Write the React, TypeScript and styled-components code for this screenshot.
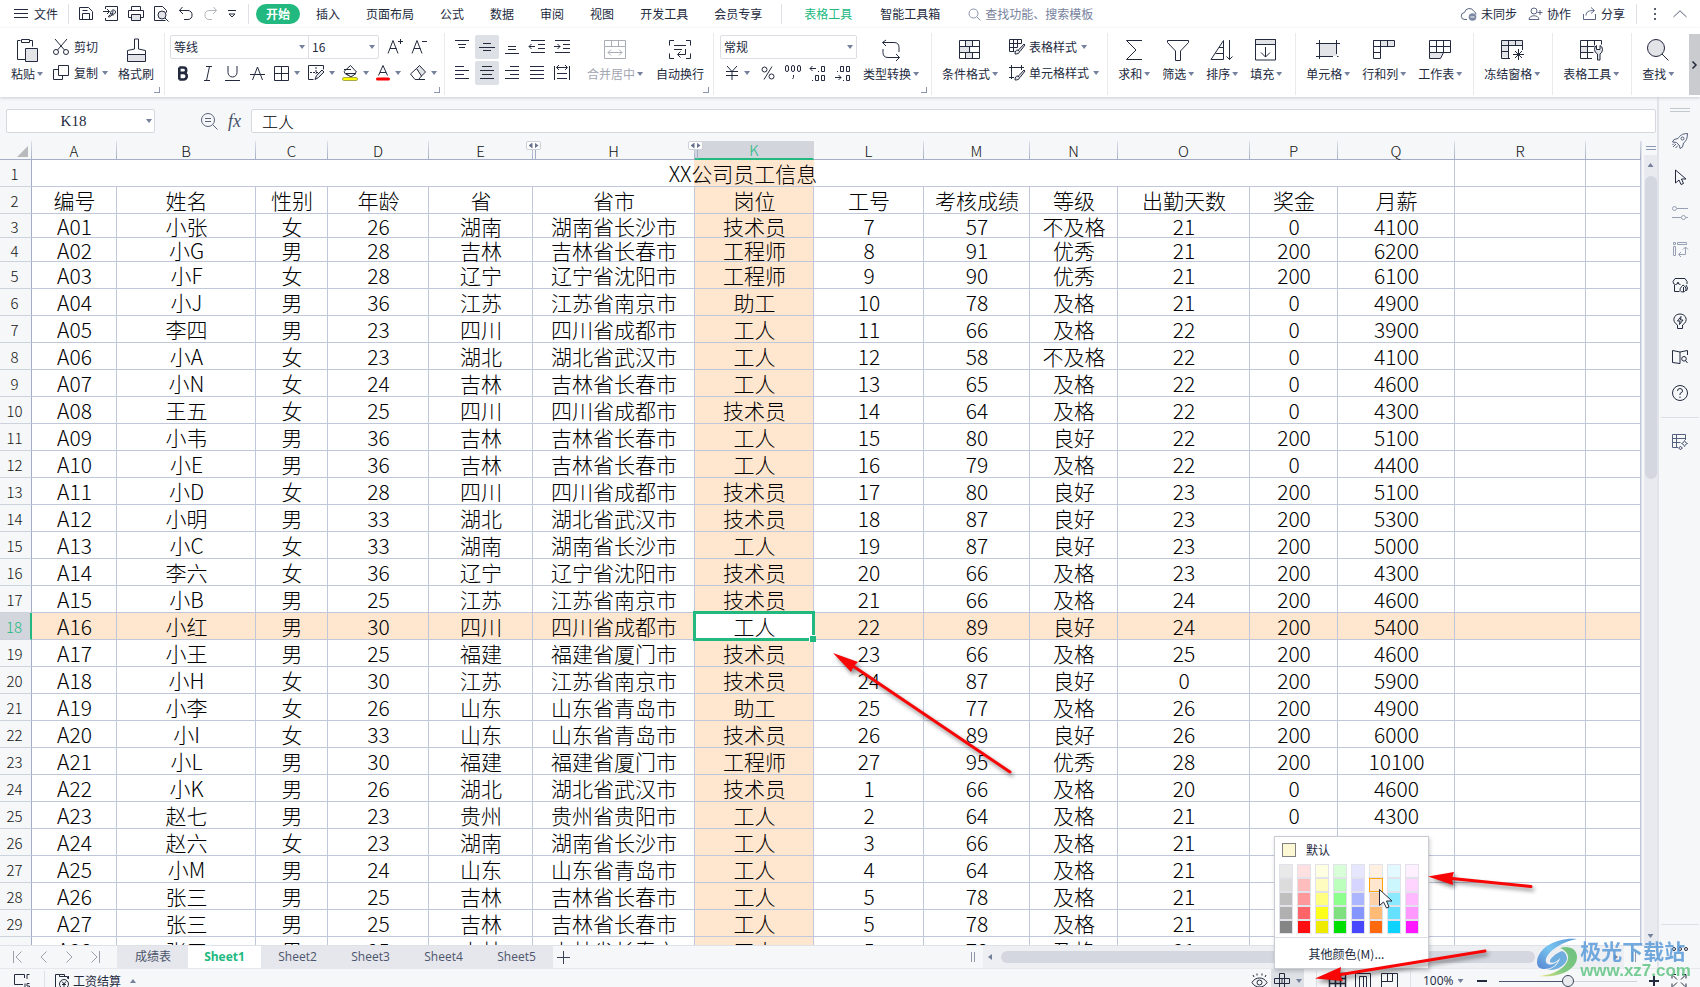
import React from 'react';
import styled, { createGlobalStyle, css } from 'styled-components';

const ink = '#232a3e';
const green = '#21b97f';
const line = '#c0c7da';
const headLine = '#a5adc6';
const panel = '#f5f7f9';
const peach = '#ffe6cf';
const uiFont = '"Noto Sans CJK SC", "Noto Sans", sans-serif';

const GlobalStyle = createGlobalStyle`
  * { box-sizing: border-box; }
  body { margin: 0; overflow: hidden; font: 12px/16px ${uiFont}; color: ${ink}; background: #fff; }
  button, input, select { font: inherit; color: inherit; margin: 0; padding: 0; border: 0; background: none; outline: none; }
  svg { display: block; flex: none; overflow: visible; }
`;

/* ---------- icons ---------- */

type Art = { w?: number; h?: number; art: React.ReactNode };
const shade = '#e2e4e8';

const icons: Record<string, Art> = {
  menu: { w: 14, h: 12, art: <path d="M0 1.5h14M0 5.5h14M0 9.5h14" /> },
  save: { art: <path d="M1.5 1.5h9l4 4v8h-13zM4.5 13.5v-6h7v6M4.5 4.5h5" /> },
  exportPdf: { art: <path d="M2.5 3V.5h12v14h-12V12M0 5.5h6M4 3l2.500 2.500L4 8M7.500 8c0-5 5-5 5-2s-4.500 2.500-4.500 1M10 4.500c0 4-2 6.500-4.500 6.500 0-2.500 3-2 5-2" /> },
  print: { art: <><path d="M3.500 4.500v-4h9v4M3.500 11.500h-3v-7h15v7h-3" /><path d="M3.500 8.500h9v6h-9z" fill={shade} /></> },
  preview: { art: <><path d="M12.500 14.500h-11v-14h8l4 4v2M13 4.500" /><circle cx="9" cy="9" r="4" fill={shade} /><path d="M12 12l3.500 3.500" /></> },
  undo: { art: <path d="M4.500 1L1.500 4.500 5 8M1.500 4.500H10a4 4 0 014 4.500 4 4 0 01-4 4.500H6" /> },
  redo: { art: <path stroke="#b4b7bd" d="M10.500 1l3 3.500L10 8M13.500 4.500H6a4 4 0 00-4 4.500 4 4 0 004 4.500h3" /> },
  custom: { w: 8, h: 8, art: <path d="M0 .5h8M1 4l3 3 3-3z" /> },
  search: { w: 13, h: 13, art: <><circle cx="5.500" cy="5.500" r="4.500" stroke="#8a93ac" /><path stroke="#8a93ac" d="M9 9l3.500 3.500" /></> },
  cloud: { art: <><path stroke="#5b6784" d="M6 13.500H4a3.500 3.500 0 01-.5-7 5 5 0 019.500-1 3 3 0 012 3" /><circle cx="11.500" cy="11" r="3.800" fill="#7c89a5" stroke="none" /><path stroke="#fff" d="M9.500 11h4" /></> },
  person: { w: 15, art: <path stroke="#5b6784" d="M6 2a3 3 0 010 6 3 3 0 010-6zM1 13.500c0-5 10-5 10 0zM9.500 6.500h5M12 4v5" /> },
  share: { w: 15, art: <path stroke="#5b6784" d="M1.500 8v5.500h12V8M4 9.500c0-4 3-5 8-5M9 1.500l3.500 3L9 7.500" /> },
  dots: { w: 4, h: 14, art: <path stroke="none" fill="#59616f" d="M1 1h2v2H1zM1 6h2v2H1zM1 11h2v2H1z" /> },
  up: { w: 14, h: 8, art: <path stroke="#59616f" d="M.5 7L7 .8 13.500 7" /> },

  paste: { w: 24, h: 24, art: <><path d="M5.500 2.500h-3v19h8M14.500 2.500h3v6M6.500 1.500h8v3h-8z" /><path d="M10.500 10.500h12v13h-12z" fill={shade} /></> },
  brush: { w: 24, h: 24, art: <><path d="M3.500 16.500v-4l7-1.500v-10h4v10l7 1.500v4" /><path d="M3.500 16.500h18v7h-18z" fill={shade} /></> },
  cut: { w: 17, art: <><path d="M2 0l9.500 11M14 0L4.500 11" /><circle cx="3" cy="13" r="2.500" /><circle cx="13" cy="13" r="2.500" /></> },
  copy: { w: 17, art: <path d="M5.500.5h10v10h-10zM5 4.500H.5v10h9v-3.500" /> },
  fontUp: { art: <path d="M1 14.500l5-13 5 13M3 9.500h6.500M13.500 0v5M11 2.500h5" /> },
  fontDown: { art: <path d="M1 14.500l5-13 5 13M3 9.500h6.500M11 2.500h5" /> },
  bold: { w: 12, h: 15, art: <path strokeWidth="2.600" d="M2.300 1.500v12M2.300 1.500h4.200a2.600 2.600 0 010 5.400H2.300M6.500 6.900a3.200 3.200 0 010 6.600H2.300" /> },
  italic: { w: 10, h: 15, art: <path d="M3 .5h6M1 14.500h6M6.500.5l-3 14" /> },
  underline: { w: 15, h: 15, art: <path d="M3 0v6.500a4.500 4.500 0 009 0V0M0 14.500h15" /> },
  strike: { w: 15, h: 15, art: <path d="M2.500 14l5-13 5 13M0 8.500h15" /> },
  borders: { w: 15, h: 15, art: <path d="M.5.5h14v14H.5zM7.500.5v14M.5 7.500h14" /> },
  cellBrush: { w: 16, art: <><path d="M15.500 4.500v-4H.5v14h5" /><path strokeDasharray="2 1" d="M8 2v7M2 7.500h10" /><path d="M7 14.500l1.500-4L14 5l2 2-5.500 5.500z" fill={shade} /></> },
  fill: { w: 16, art: <><path d="M2 6.500L8.500.5 14.500 7 9 11.500 3.500 9z" fill="#fff" /><path d="M4 8.500h10L9 12z" fill={shade} /><path d="M2 4.500h7" /><rect x=".5" y="12.500" width="15" height="3" rx="1.500" fill="#ff0" stroke="#a9a94a" /></> },
  fontColor: { w: 14, art: <><path d="M2.500 10.500l4.500-10 4.500 10M4 7.500h6" /><rect x="0" y="12.500" width="14" height="3" rx="1.500" fill="#f00" stroke="none" /></> },
  eraser: { w: 16, art: <><path d="M6.500 3.500l3-3 6 6.500-4.500 4.500z" fill={shade} /><path d="M.5 9l6-5.500 5 7.500-3 3.500H5z" fill="#fff" /><path d="M5 14.500h10" /></> },

  vTop: { art: <path d="M1 1.500h14M4 5.500h8M5 8.500h6" /> },
  vMid: { art: <path d="M4 4.500h8M0 8.500h16M4 11.500h8" /> },
  vBot: { art: <path d="M4 7.500h8M4 10.500h8M1 14.500h14" /> },
  outdent: { art: <path d="M2 1.500h14M9 5.500h7M9 9.500h7M2 13.500h14M0 7.500h6M2.500 5L0 7.500 2.500 10" /> },
  indent: { art: <path d="M1 1.500h15M9 5.500h7M9 9.500h7M1 13.500h15M0 7.500h6M3.500 5L6 7.500 3.500 10" /> },
  left: { art: <path d="M1 1.500h9M1 5.500h14M1 9.500h9M1 13.500h14" /> },
  center: { art: <path d="M3 1.500h10M1 5.500h14M3 9.500h10M1 13.500h14" /> },
  right: { art: <path d="M6 1.500h9M1 5.500h14M6 9.500h9M1 13.500h14" /> },
  justify: { art: <path d="M1 1.500h14M1 5.500h14M1 9.500h14M1 13.500h14" /> },
  distribute: { art: <path d="M.5 1v14M15.500 1v14M3 2.500h10M5 0L2.500 2.500 5 5M11 0l2.500 2.500L11 5M3 8.500h10M3 13.500h10" /> },
  merge: { w: 22, h: 20, art: <path stroke="#a9adb6" d="M.5.5h21v18H.5zM.5 6.500h21M7.500.5v6M14.500.5v6M4 12.500h14M7 9.500l-3 3 3 3M15 9.500l3 3-3 3" /> },
  wrap: { w: 22, h: 20, art: <path d="M5 .5H.5v5M17 .5h4.500v5M5 18.500H.5v-5M17 18.500h4.500v-5M5 5.500h12M5 9.500h8M16.500 9v5.500H9M11.500 11.500l-3 3 3 3" /> },
  yen: { w: 14, h: 14, art: <path d="M2 0l5 5.500L12 0M1 5.500h12M1 9.500h12M7 5.500V14" /> },
  percent: { w: 14, h: 14, art: <><circle cx="3.500" cy="3.500" r="2.500" /><circle cx="10.500" cy="10.500" r="2.500" /><path d="M11 .5l-8 13" /></> },
  thousands: { art: <path d="M.5 2q0-1.500 1.500-1.500T3.500 2v3q0 1.500-1.500 1.500T.5 5zM6.500 2q0-1.500 1.500-1.500T9.500 2v3q0 1.500-1.500 1.500T6.500 5zM12.500 2q0-1.500 1.500-1.500T15.500 2v3q0 1.500-1.500 1.500T12.500 5zM8.500 10v2.500l-1 1.500" /> },
  decUp: { art: <path d="M0 3.500h6M2.500 1L0 3.500 2.500 6M8 6.500h1M11.500 1.500h3v5h-3zM2 15.500h1M5.500 10.500h3v5h-3zM11.500 10.500h3v5h-3z" /> },
  decDown: { art: <path d="M2 6.500h1M5.500 1.500h3v5h-3zM11.500 1.500h3v5h-3zM0 12.500h6M3.500 10L6 12.500 3.500 15M8 15.500h1M11.500 10.500h3v5h-3z" /> },
  convert: { w: 20, h: 22, art: <path d="M5 1L1.500 3.500 5 7M1.500 3.500H13q5 0 5 5V13M15 22l3.500-3.500L15 15M18.500 18.500H7q-5 0-5-5V10" /> },
  condFmt: { w: 22, h: 20, art: <><path d="M7 .5h7v6H7zM.5 6.500h11v6H.5zM7 12.500h7v6H7z" fill={shade} stroke="none" /><path d="M.5.5h20v18H.5zM.5 6.500h20M.5 12.500h20M6.500.5v6M13.500.5v6M10.500 6.500v6M6.500 12.500v6M13.500 12.500v6" /></> },
  tblStyle: { art: <><path d="M.5.5h12v4M.5.500v12h5M.5 4.500h12M.5 8.500h8M4.500.5v12M8.500.5v8" /><path d="M6 15c0-3 1-4 3-4l1.500 1.500c0 2-2 2.500-4.500 2.500zM9.500 11L15 5l1 1-5 6.500" fill={shade} /></> },
  cellStyle: { art: <><path d="M2.500 0v14M0 2.500h15M12.500 0v5M0 12.500h5" /><path d="M6 15c0-3 1-4 3-4l1.500 1.500c0 2-2 2.500-4.500 2.500zM9.500 11L15 5l1 1-5 6.500" fill={shade} /></> },
  sum: { w: 18, h: 22, art: <path d="M17 1.500H1.500L11 11l-9.500 9.500H17" /> },
  filter: { w: 22, h: 22, art: <path d="M.5 1.500h21v2L13.500 12v9.500h-5V12L.5 3.500z" /> },
  sort: { w: 24, h: 22, art: <path d="M1 20.500L13.500 1.500v19zM9 8.500h4.500M5.500 14.500h8M19.500 1v19.500M16.500 17.500l3 3 3-3" /> },
  fillDown: { w: 22, h: 22, art: <><path d="M.5.5h20v5H.5z" fill={shade} /><path d="M.5.5h20v20.500H.5zM10.500 8v10M6 13.500l4.500 4.500 4.500-4.500" /></> },
  cell: { w: 24, h: 20, art: <><path d="M4 4h17v12H4z" fill={shade} stroke="none" /><path d="M0 3.500h24M3.500 0v19M20.500 0v14M0 16.500h17M21 16.500h1.500" /></> },
  rowCol: { w: 22, h: 20, art: <><path d="M8 .5h14v6H8z" fill={shade} stroke="none" /><path d="M.5.5h21v6H.5zM.5.5v18h7V.5M14.500.5v6M.5 12.500h7" /></> },
  sheet: { w: 22, h: 20, art: <><path d="M.5 13h14l-3 5.500H.5z" fill={shade} stroke="none" /><path d="M.5.5h21v12H.5zM.5 6.500h21M7.500.5v12M14.500.5v12M.5 12.500v6h11l3-6" /></> },
  freeze: { w: 22, h: 20, art: <><path d="M.5.5h21v5H.5zM.5 5.500h7v12h-7z" fill={shade} stroke="none" /><path d="M9 18.500H.5V.5h21v5H.5M7.500.5v18M14.500.5v5M.5 11.500h7M21.500 5v5M12 14.500h11M17.500 9v11M14 11l7 7M21 11l-7 7" /></> },
  tblTool: { w: 22, h: 20, art: <><path d="M.5 5.500h7v7h-7z" fill={shade} stroke="none" /><path d="M12 18.500H.5V.5h21v4M.5 6.500h14M.5 12.500h13M7.500.5v18M14.500.5v5" /><path d="M17.500 20v-6q-3-1.500-3-4.500t2-4v4h3.500v-4q2.500 1 2.500 4t-2.500 4.500v6z" fill={shade} /></> },
  find: { w: 22, h: 22, art: <><circle cx="9" cy="9" r="8.500" fill={shade} /><path d="M15 15l6.500 6.500" /></> },
  chevR: { w: 5, h: 8, art: <path d="M.5.5L4 4 .5 7.500" strokeWidth="1.500" /> },

  zoomOut: { w: 17, h: 17, art: <path stroke="#59647c" d="M7 .5a6.500 6.500 0 010 13 6.500 6.500 0 010-13zM12 12l4.500 4.500M4 5.500h6M4 8.500h6" /> },

  rocket: { art: <path stroke="#55617c" d="M15.500.5C10 .5 7.500 3 6 5.500L2 6.500.5 9l4 .5 3 3L8 15.500l2.500-1.500 1-4c2.500-1.500 4-4.500 4-9.500zM10.500 4a1.500 1.500 0 010 3 1.500 1.500 0 010-3zM4 11l-3 3M6 12.500L3.500 15M2 10.500L.5 12" /> },
  arrow: { w: 14, art: <path d="M2.500 1v13l3.500-3 2 4.500 2.500-1-2-4.500h4.500z" /> },
  sliders: { art: <path stroke="#98a0b4" d="M5 3.500h11M0 12.500h9M2.500 1.500a2 2 0 010 4 2 2 0 010-4zM11.500 10.500a2 2 0 010 4 2 2 0 010-4zM14 12.500h2" /> },
  pivot: { art: <path stroke="#98a0b4" d="M1.500 1.500h2v2h-2zM5.500 1.500h9v2h-9zM1.500 5.500h2v9h-2zM13.500 6v7.500H7M11 8.500l2.500-2.500L16 8.500M9 11l-2.500 2.500L9 16" /> },
  shop: { art: <path d="M2.500 8v6.500h5M1 4.500L3 1.500h10l2 3V7M1 4.500q0 3 2.500 3T6 5q0 2.500 2.500 2.500M8 13c0-3 2-3 3-5 2 1 3 3 3 4s-1 3-3 3-3-1-3-2zM11.500 10v5M14 8l1.500 3-1 3" /> },
  bulb: { art: <path d="M5.500 12C-1 8 2 1 8 1s9 7 2.500 11v3.500h-5zM9 3.500L5.500 8h2.500l-.5 3.500L11 7H8.500z" /> },
  book: { art: <path d="M8 3L.5 1.500v12L8 14.500M8 14.500V3l7.500-1.500V6M12 7.500a2.300 2.300 0 010 4.600 2.300 2.300 0 010-4.600zM13.500 11.500l2 2.500" /> },
  help: { art: <path d="M8 .5a7.500 7.500 0 010 15 7.500 7.500 0 010-15zM5.500 6q0-2.500 2.500-2.500T10.500 6Q10.500 7.500 8 8.500v1.500M8 11.500v1.500" /> },
  tblSpark: { art: <path stroke="#55617c" d="M6 13.500H.5V.5h13V6M.5 4.500h13M.5 8.500h8M4.500.5v13M12.500 6.500l1 2 2 1-2 1-1 2-1-2-2-1 2-1zM8.500 12l.7 1.300 1.300.7-1.300.7-.7 1.300-.7-1.300-1.300-.7 1.300-.7z" /> },

  first: { w: 9, h: 12, art: <path stroke="#9a9fab" d="M.5 0v12M8.500.5L3 6l5.500 5.500" /> },
  prev: { w: 7, h: 12, art: <path stroke="#9a9fab" d="M6.500.5L1 6l5.500 5.500" /> },
  next: { w: 7, h: 12, art: <path stroke="#9a9fab" d="M.5.5L6 6 .5 11.500" /> },
  last: { w: 9, h: 12, art: <path stroke="#9a9fab" d="M8.500 0v12M.5.5L6 6 .5 11.500" /> },
  plus: { w: 13, h: 13, art: <path d="M0 6.500h13M6.500 0v13" stroke="#3a4358" /> },
  plusBold: { w: 10, h: 10, art: <path d="M0 5h10M5 0v10" strokeWidth="2" /> },
  minusBold: { w: 10, h: 10, art: <path d="M0 5h10" strokeWidth="2" /> },
  macro: { art: <path d="M9 11.500H.5v-10h10V5M15.500 1.500h-2.500V6M11 10.500v5M15.500 10.500h-2.500v2.500h2.500v2.500H13" /> },
  payroll: { art: <><path d="M4 15.500H1.500v-14h4v2h8v2M5.500 1.500h5v2M14.500 3v3" /><circle cx="10" cy="11" r="4.500" /><path d="M8 8.500l2 2.500 2-2.500M8 11.500h4M10 11v3.500" /></> },
  eye: { w: 17, art: <><path d="M1 9.500c3-6 12-6 15 0-3 6-12 6-15 0zM3 4L2 2M6 2.500V.5M11 2.500V.5M14 4l1-2" /><circle cx="8.500" cy="9.500" r="2.500" /></> },
  cross: { art: <path d="M.5 5.500h15v5H.5zM5.500.5h5v15h-5zM8 5.500v5" /> },
  normal: { w: 17, art: <><path d="M.5.5h16v15H.5zM.5 5.500h16M.5 10.500h16M6.500.5v15M11.500.5v15" strokeWidth="1.500" /></> },
  pageView: { w: 17, art: <path d="M.5.500h15v15H.5zM4.500 3.500h7v12M8.500 3.500v12M4.500 3.500v12M3 3.500" /> },
  breakView: { w: 17, art: <path d="M.5 15.500V.5h16v15M.5 8.500h11M6.500.5v8M11.500.5v8" /> },
  full: { art: <path d="M1 5.500v-4h4M11 1.500h4v4M15 10.500v4h-4M5 14.500H1v-4M2 2.500l4 4M14 2.500l-4 4M14 13.500l-4-4M2 13.500l4-4" /> },
  more: { w: 16, h: 4, art: <><circle cx="2" cy="2" r="1.500" /><circle cx="8" cy="2" r="1.500" /><circle cx="14" cy="2" r="1.500" /></> },
};

const Icon = ({ name }: { name: string }) => {
  const { w = 16, h = 16, art } = icons[name];
  return (
    <svg width={w} height={h} viewBox={`0 0 ${w} ${h}`} fill="none" stroke={ink} strokeWidth="1" aria-hidden="true">
      {art}
    </svg>
  );
};

const Caret = styled.i<{ $up?: boolean }>`
  flex: none;
  width: 6px;
  height: 4px;
  background: #74809c;
  clip-path: ${(p) => (p.$up ? 'polygon(50% 0, 100% 100%, 0 100%)' : 'polygon(0 0, 100% 0, 50% 100%)')};
`;

/* ---------- frame ---------- */

const Shell = styled.div`
  position: relative;
  display: flex;
  flex-direction: column;
  height: 100vh;
  overflow: hidden;
`;

const Row = styled.div<{ $gap?: number }>`
  display: flex;
  align-items: center;
  gap: ${(p) => p.$gap ?? 0}px;
`;

const MenuBar = styled.header`
  flex: none;
  display: flex;
  align-items: center;
  height: 28px;
  padding: 0 13px 0 14px;
  white-space: nowrap;
`;

const Divider = styled.span<{ $h?: number }>`
  flex: none;
  width: 1px;
  height: ${(p) => p.$h ?? 20}px;
  background: #dfe1e6;
`;

const PlainButton = styled.button<{ $gap?: number }>`
  display: flex;
  align-items: center;
  gap: ${(p) => p.$gap ?? 4}px;
  white-space: nowrap;
`;

const QuickBar = styled.div`
  display: flex;
  align-items: center;
  gap: 9px;
  margin: 0 12px 0 9px;
`;

const Nav = styled.nav`
  display: flex;
  align-items: center;
  gap: 26px;
  margin: 0 19px 0 7px;
`;

const ContextTabs = styled(Nav)`
  gap: 28px;
  margin: 0 0 0 22px;
`;

const Tab = styled.button<{ $kind?: 'active' | 'context' }>`
  color: ${(p) => (p.$kind === 'context' ? green : ink)};
  ${(p) =>
    p.$kind === 'active' &&
    css`
      height: 20px;
      padding: 0 10px;
      margin-right: -10px;
      border-radius: 10px;
      background: ${green};
      color: #fff;
      font-weight: 700;
    `}
`;

const SearchBox = styled.label`
  display: flex;
  align-items: center;
  flex: 1;
  gap: 4px;
  margin-left: 28px;
  input { flex: 1; min-width: 0; }
  input::placeholder { color: #77829d; opacity: 1; }
`;

const Ribbon = styled.div`
  position: relative;
  z-index: 1;
  flex: none;
  display: flex;
  height: 69px;
  padding: 5px 0 2px;
  background: #fff;
  box-shadow: 0 1px 3px #c9ccd2;
`;

const Group = styled.div<{ $l?: number; $r?: number; $gap?: number }>`
  position: relative;
  flex: none;
  display: flex;
  gap: ${(p) => p.$gap ?? 0}px;
  padding: 2px ${(p) => p.$r ?? 10}px 0 ${(p) => p.$l ?? 10}px;
  border-right: 1px solid #e8eaed;
  &:last-of-type { border-right: 0; }
`;

const Launcher = styled.button`
  position: absolute;
  right: 4px;
  bottom: 2px;
  width: 6px;
  height: 6px;
  border-right: 1px solid #8a94ad;
  border-bottom: 1px solid #8a94ad;
`;

const Stack = styled.div`
  display: flex;
  flex-direction: column;
  gap: 2px;
`;

const Line = styled.div<{ $gap?: number }>`
  display: flex;
  align-items: center;
  gap: ${(p) => p.$gap ?? 0}px;
  height: 24px;
`;

const BigButton = styled.button<{ $muted?: boolean }>`
  display: flex;
  flex-direction: column;
  align-items: center;
  align-self: flex-start;
  gap: 4px;
  padding-top: 3px;
  color: ${(p) => (p.$muted ? '#a3a7b1' : ink)};
  white-space: nowrap;
`;

const IconSlot = styled.span`
  display: flex;
  align-items: center;
  justify-content: center;
  height: 24px;
`;

const IconButton = styled.button<{ $on?: boolean; $w?: number }>`
  display: flex;
  align-items: center;
  justify-content: center;
  width: ${(p) => p.$w ?? 24}px;
  height: 24px;
  border-radius: 2px;
  background: ${(p) => (p.$on ? '#dde1e6' : 'transparent')};
`;

const DropButton = styled.button`
  display: flex;
  align-items: center;
  gap: 5px;
  width: 34px;
  height: 24px;
`;

const FontTools = styled.div`
  display: flex;
  margin-right: 4px;
`;

const FieldSet = styled.div`
  display: flex;
  height: 24px;
  margin-right: 4px;
  border: 1px solid #dcdee3;
  border-radius: 2px;
`;

const Field = styled.span<{ $w: number; $split?: boolean }>`
  display: grid;
  align-items: center;
  width: ${(p) => p.$w}px;
  border-left: ${(p) => (p.$split ? '1px solid #dcdee3' : '0')};
  > * { grid-area: 1 / 1; }
  > i { justify-self: end; margin-right: 3px; pointer-events: none; }
  select { appearance: none; width: 100%; height: 100%; padding-left: 3px; }
`;

const ScrollRibbon = styled.button`
  display: flex;
  align-items: center;
  justify-content: center;
  width: 11px;
  margin: 1px 0 0 auto;
  background: #cacbcf;
`;

const Tool = ({ icon, label, drop = true, muted }: { icon: string; label: string; drop?: boolean; muted?: boolean }) => (
  <BigButton $muted={muted} type="button">
    <IconSlot><Icon name={icon} /></IconSlot>
    <Row $gap={2}>{label}{drop && <Caret />}</Row>
  </BigButton>
);

/* ---------- formula bar ---------- */

const Body = styled.div`
  flex: 1;
  min-height: 0;
  display: flex;
`;

const Main = styled.main`
  flex: 1;
  min-width: 0;
  display: flex;
  flex-direction: column;
  background: ${panel};
`;

const FormulaBar = styled.div`
  flex: none;
  display: flex;
  align-items: center;
  height: 44px;
  padding: 4px 1px 0 6px;
`;

const NameBox = styled.div`
  display: flex;
  align-items: center;
  width: 149px;
  height: 24px;
  padding-right: 2px;
  border: 1px solid #d5d8de;
  border-radius: 2px;
  background: #fff;
  input { flex: 1; min-width: 0; padding-right: 6px; text-align: center; font: 15px/20px "Liberation Serif", serif; }
`;

const FormulaTools = styled.div`
  display: flex;
  align-items: center;
  gap: 10px;
  margin: 0 10px 0 46px;
  button:last-child { font: italic 18px/20px "Liberation Serif", serif; color: #47516a; }
`;

const FormulaInput = styled.input`
  && {
    flex: 1;
    height: 24px;
    padding: 0 10px;
    border: 1px solid #d5d8de;
    border-radius: 2px;
    background: #fff;
    font-size: 16px;
    font-weight: 300;
    color: #000;
  }
`;

/* ---------- grid ---------- */

const SheetRow = styled.div`
  flex: 1;
  min-height: 0;
  display: flex;
`;

const Viewport = styled.div`
  flex: 1;
  min-width: 0;
  overflow: hidden;
  background: #fff;
`;

const Grid = styled.table`
  width: 100%;
  table-layout: fixed;
  border-collapse: separate;
  border-spacing: 0;
  color: #000;
  font-size: 21px;
  font-weight: 300;
`;

const ColHead = styled.th<{ $on?: boolean }>`
  position: relative;
  height: 19px;
  padding: ${(p) => (p.$on ? 1 : 2)}px 0 0;
  border-right: 1px solid;
  border-image: linear-gradient(#dfe2ea, ${headLine}) 1;
  border-bottom: ${(p) => (p.$on ? `2px solid ${green}` : `1px solid ${headLine}`)};
  ${(p) => p.$on && `border-image: none; border-right-color: #d2d5dc; border-bottom-color: ${green};`}
  background: ${(p) => (p.$on ? '#d2d5dc' : panel)};
  color: ${(p) => (p.$on ? green : '#111')};
  font-size: 15px;
  line-height: 16px;
  font-weight: 300;
`;

const Corner = styled(ColHead)`
  padding: 0;
  i {
    display: block;
    width: 11px;
    height: 11px;
    margin: 3px 3px 0 auto;
    background: #b9babd;
    clip-path: polygon(100% 0, 100% 100%, 0 100%);
  }
`;

const Expander = styled.button`
  position: absolute;
  z-index: 1;
  right: -9px;
  top: 0;
  display: flex;
  align-items: center;
  justify-content: center;
  gap: 2px;
  width: 15px;
  height: 9px;
  border: 1px solid #cdd0d8;
  border-radius: 2px;
  background: #fff;
  i { width: 4px; height: 6px; background: #68728c; clip-path: polygon(0 50%, 100% 0, 100% 100%); }
  i + i { clip-path: polygon(100% 50%, 0 0, 0 100%); }
  &::after {
    content: '';
    position: absolute;
    left: 8px;
    top: 8px;
    width: 1px;
    height: 9px;
    background: ${headLine};
  }
`;

const RowHead = styled.th<{ $on?: boolean; $h: number }>`
  height: ${(p) => p.$h}px;
  padding: 2px 2px 0 0;
  border-right: ${(p) => (p.$on ? `2px solid ${green}` : `1px solid ${headLine}`)};
  border-bottom: 1px solid #cdd2df;
  background: ${(p) => (p.$on ? '#d2d5dc' : panel)};
  color: ${(p) => (p.$on ? green : '#111')};
  font-size: 15px;
  line-height: 20px;
  font-weight: 300;
`;

const Cell = styled.td<{ $on?: boolean; $h: number }>`
  height: ${(p) => p.$h}px;
  padding: ${(p) => (p.$h < 27 ? 2 : 0)}px 0 0 1px;
  border-right: 1px solid ${line};
  border-bottom: 1px solid ${line};
  background: ${(p) => (p.$on ? peach : '#fff')};
  text-align: center;
  line-height: ${(p) => (p.$h < 27 ? p.$h - 3 : p.$h - 1)}px;
  white-space: nowrap;
`;

const TitleCell = styled(Cell)`
  padding-left: 0;
  background: linear-gradient(to right, #fff 662px, ${peach} 662px, ${peach} 782px, #fff 782px);
`;

const ActiveCell = styled(Cell)`
  position: relative;
  &::before {
    content: '';
    position: absolute;
    inset: -2px -2px -2px -2px;
    border: 3px solid ${green};
  }
  &::after {
    content: '';
    position: absolute;
    right: -3px;
    bottom: -3px;
    width: 6px;
    height: 6px;
    border: solid #fff;
    border-width: 1px 0 0 1px;
    background: ${green};
  }
`;

const cols: [string, number | undefined][] = [
  ['A', 85], ['B', 139], ['C', 72], ['D', 101], ['E', 104], ['H', 162], ['K', 119], ['L', 110],
  ['M', 106], ['N', 88], ['O', 132], ['P', 88], ['Q', 117], ['R', 131], ['', undefined],
];

const data = `编号 姓名 性别 年龄 省 省市 岗位 工号 考核成绩 等级 出勤天数 奖金 月薪
A01 小张 女 26 湖南 湖南省长沙市 技术员 7 57 不及格 21 0 4100
A02 小G 男 28 吉林 吉林省长春市 工程师 8 91 优秀 21 200 6200
A03 小F 女 28 辽宁 辽宁省沈阳市 工程师 9 90 优秀 21 200 6100
A04 小J 男 36 江苏 江苏省南京市 助工 10 78 及格 21 0 4900
A05 李四 男 23 四川 四川省成都市 工人 11 66 及格 22 0 3900
A06 小A 女 23 湖北 湖北省武汉市 工人 12 58 不及格 22 0 4100
A07 小N 女 24 吉林 吉林省长春市 工人 13 65 及格 22 0 4600
A08 王五 女 25 四川 四川省成都市 技术员 14 64 及格 22 0 4300
A09 小韦 男 36 吉林 吉林省长春市 工人 15 80 良好 22 200 5100
A10 小E 男 36 吉林 吉林省长春市 工人 16 79 及格 22 0 4400
A11 小D 女 28 四川 四川省成都市 技术员 17 80 良好 23 200 5100
A12 小明 男 33 湖北 湖北省武汉市 技术员 18 87 良好 23 200 5300
A13 小C 女 33 湖南 湖南省长沙市 工人 19 87 良好 23 200 5000
A14 李六 女 36 辽宁 辽宁省沈阳市 技术员 20 66 及格 23 200 4300
A15 小B 男 25 江苏 江苏省南京市 技术员 21 66 及格 24 200 4600
A16 小红 男 30 四川 四川省成都市 工人 22 89 良好 24 200 5400
A17 小王 男 25 福建 福建省厦门市 技术员 23 66 及格 25 200 4600
A18 小H 女 30 江苏 江苏省南京市 技术员 24 87 良好 0 200 5900
A19 小李 女 26 山东 山东省青岛市 助工 25 77 及格 26 200 4900
A20 小I 女 33 山东 山东省青岛市 技术员 26 89 良好 26 200 6000
A21 小L 男 30 福建 福建省厦门市 工程师 27 95 优秀 28 200 10100
A22 小K 男 26 湖北 湖北省武汉市 技术员 1 66 及格 20 0 4600
A23 赵七 男 23 贵州 贵州省贵阳市 工人 2 64 及格 21 0 4300
A24 赵六 女 23 湖南 湖南省长沙市 工人 3 66 及格 21 0 3900
A25 小M 男 24 山东 山东省青岛市 工人 4 64 及格 21
A26 张三 男 25 吉林 吉林省长春市 工人 5 78 及格 21
A27 张三 男 25 吉林 吉林省长春市 工人 5 78 及格 21
A28 张三 男 25 吉林 吉林省长春市 工人 5 78 及格 21`
  .split('\n')
  .map((r) => r.split(' '));

const rowHeight = (n: number) => (n === 3 || n === 4 ? 24 : 27);

const Sheet = () => (
  <Grid>
    <colgroup>
      <col width={32} />
      {cols.map(([name, w]) => <col key={name} width={w} />)}
    </colgroup>
    <thead>
      <tr>
        <Corner><i /></Corner>
        {cols.map(([name]) => (
          <ColHead key={name} scope="col" $on={name === 'K'}>
            {name}
            {(name === 'E' || name === 'H') && <Expander type="button" aria-label="展开隐藏列"><i /><i /></Expander>}
          </ColHead>
        ))}
      </tr>
    </thead>
    <tbody>
      <tr>
        <RowHead scope="row" $h={27}>1</RowHead>
        <TitleCell colSpan={13} $h={27}>XX公司员工信息</TitleCell>
        <Cell $h={27} />
        <Cell $h={27} />
      </tr>
      {data.map((row, i) => {
        const n = i + 2;
        const h = rowHeight(n);
        return (
          <tr key={n}>
            <RowHead scope="row" $h={h} $on={n === 18}>{n}</RowHead>
            {cols.map(([name], c) =>
              n === 18 && name === 'K'
                ? <ActiveCell key={name} $h={h}>{row[c]}</ActiveCell>
                : <Cell key={name} $h={h} $on={n === 18 || name === 'K'}>{row[c]}</Cell>,
            )}
          </tr>
        );
      })}
    </tbody>
  </Grid>
);

const VScroll = styled.div`
  flex: none;
  display: flex;
  flex-direction: column;
  width: 16px;
  padding: 0 0 0 2px;
  border-left: 1px solid #dfe1e8;
`;

const SplitHandle = styled.div`
  flex: none;
  width: 10px;
  height: 4px;
  margin: 5px 2px;
  border: solid #8b97b3;
  border-width: 1px 0;
`;

const VTrack = styled.div`
  flex: 1;
  display: flex;
  flex-direction: column;
  align-items: center;
  justify-content: space-between;
  padding: 8px 0 7px;
  background: #e8eaf0;
`;

const VThumb = styled.div`
  width: 12px;
  height: 303px;
  margin: 9px 0 auto;
  border-radius: 6px;
  background: #d4d7df;
`;

const TabBar = styled.div`
  flex: none;
  display: flex;
  align-items: center;
  height: 23px;
  border-top: 1px solid #dfe1e8;
  background: ${panel};
`;

const TabNav = styled.div`
  display: flex;
  align-items: center;
  justify-content: space-between;
  width: 117px;
  padding: 0 17px 0 13px;
`;

const SheetTab = styled.button<{ $on?: boolean }>`
  width: 73px;
  height: 22px;
  background: ${(p) => (p.$on ? '#fff' : '#e6e7ec')};
  color: ${(p) => (p.$on ? green : '#4c556c')};
  font: ${(p) => (p.$on ? 700 : 400)} 12px/20px "Open Sans", ${uiFont};
`;

const SheetTabs = styled.div`
  display: flex;
  margin-right: 4px;
  > button:first-child { width: 71px; padding-left: 1px; }
`;

const HScroll = styled.div`
  display: flex;
  align-items: center;
  width: 665px;
  gap: 8px;
  margin: 0 21px 0 auto;
`;

const HTrack = styled.div`
  flex: 1;
  display: flex;
  align-items: center;
  gap: 9px;
  height: 22px;
  padding: 0 6px 0 5px;
  background: #edeff3;
  i { width: 4px; height: 6px; background: #74809c; clip-path: polygon(0 50%, 100% 0, 100% 100%); }
  i:last-child { margin-left: auto; clip-path: polygon(100% 50%, 0 0, 0 100%); }
`;

const HThumb = styled.div`
  width: 534px;
  height: 12px;
  border-radius: 6px;
  background: #d4d7df;
`;

const Grip = styled.span`
  width: 4px;
  height: 10px;
  border: solid #8f97a8;
  border-width: 0 1px;
`;

/* ---------- side panel ---------- */

const SideBar = styled.aside`
  flex: none;
  display: flex;
  flex-direction: column;
  align-items: center;
  width: 43px;
  border-left: 2px solid #e1e3ea;
  background: ${panel};
`;

const DragHandle = styled.div`
  width: 20px;
  height: 4px;
  margin: 11px 0;
  border: solid #c4c8cf;
  border-width: 1px 0;
`;

const SideButton = styled.button`
  display: flex;
  align-items: center;
  justify-content: center;
  width: 36px;
  height: 36px;
`;

const SideRule = styled.hr<{ $push?: boolean }>`
  width: 38px;
  margin: ${(p) => (p.$push ? 'auto 0 22px' : '6px 0')};
  border: 0;
  border-top: 1px solid #dde0e6;
`;

const SideMore = styled(PlainButton)`
  margin-bottom: 17px;
`;

/* ---------- status bar ---------- */

const StatusClip = styled.footer`
  flex: none;
  height: 19px;
  overflow: hidden;
  background: ${panel};
  border-top: 1px solid #e6e8ec;
`;

const Status = styled.div`
  display: flex;
  align-items: center;
  height: 24px;
  padding: 0 13px 0 14px;
`;

const StatusRight = styled.div`
  display: flex;
  align-items: center;
  gap: 12px;
  margin-left: auto;
`;

const HighlightButton = styled.button`
  display: flex;
  align-items: center;
  gap: 6px;
  width: 33px;
  height: 26px;
  padding-left: 3px;
  background: #dde1e6;
`;

const ZoomLevel = styled(PlainButton)`
  width: 42px;
  font-family: "Open Sans", sans-serif;
`;

const ZoomRange = styled.input`
  && {
    appearance: none;
    width: 138px;
    height: 14px;
    background: linear-gradient(to right, #4b5570 50%, #cfd2da 50%) center / 100% 1px no-repeat;
  }
  &::-webkit-slider-thumb {
    appearance: none;
    width: 12px;
    height: 12px;
    border: 1px solid #3d465c;
    border-radius: 50%;
    background: #e9ebee;
  }
`;

/* ---------- colour menu ---------- */

const ColorMenu = styled.div`
  position: absolute;
  right: 271px;
  bottom: 18px;
  width: 155px;
  height: 133px;
  border: 1px solid #c9ccd3;
  background: #fff;
  box-shadow: 1px 2px 4px #0003;
`;

const DefaultColor = styled(PlainButton)`
  height: 26px;
  padding: 0 0 0 7px;
  span { width: 14px; height: 14px; margin-right: 6px; border: 1px solid #808080; background: #fcf8d3; }
`;

const Swatches = styled.div`
  display: grid;
  grid-template-columns: repeat(8, 14px);
  grid-auto-rows: 14px;
  column-gap: 4px;
  padding: 1px 0 3px 4px;
`;

const Swatch = styled.button<{ $c: string; $on?: boolean }>`
  border: 1px solid ${(p) => (p.$on ? '#ffa60d' : '#e1e2ea')};
  background: ${(p) => p.$c};
`;

const OtherColors = styled(PlainButton)`
  justify-content: center;
  width: 100%;
  height: 32px;
  padding-right: 10px;
  border-top: 1px solid #dcdee3;
`;

const swatches = `#e9e9e9 #ffe0e0 #ffffe2 #d9ffd9 #e6e6ff #fff0e2 #e2faff #fff0ff
#dcdcdc #ffbcbc #fffcbf #bcffbc #d5d5ff #ffe6cf #ccf7ff #ffd5ff
#bfbfbf #ff989b #ffff80 #8cff8c #acb6ff #ffd1a8 #8ceaff #ffbaff
#b0b0b0 #ff6468 #ffff1c #80e080 #8596ff #ffbb75 #66e0ff #ff98ff
#858585 #ff0f12 #eeea00 #00df00 #4747ff #ff690d #0fd3ff #ff17ff`.split(/\s+/);

/* ---------- annotations ---------- */

const Mark = styled.svg<{ $l?: number; $t?: number; $r?: number; $b?: number }>`
  position: absolute;
  z-index: 3;
  ${(p) => p.$l !== undefined && `left: ${p.$l}px;`}
  ${(p) => p.$t !== undefined && `top: ${p.$t}px;`}
  ${(p) => p.$r !== undefined && `right: ${p.$r}px;`}
  ${(p) => p.$b !== undefined && `bottom: ${p.$b}px;`}
  pointer-events: none;
`;

const Arrow = styled(Mark)`
  filter: drop-shadow(2px 3px 2px #0007);
  fill: #f80606;
  stroke: #f80606;
  stroke-linecap: round;
`;

const SiteMark = styled.div`
  position: absolute;
  z-index: 2;
  right: 9px;
  bottom: 8px;
  display: flex;
  align-items: center;
  gap: 2px;
  opacity: 0.85;
  pointer-events: none;
  div { display: grid; white-space: nowrap; }
  strong { color: #5b9bd8; font-size: 21px; line-height: 26px; }
  span { color: #62c584; font: 700 17px/16px "Liberation Sans", sans-serif; }
`;

export default function App() {
  return (
    <Shell>
      <GlobalStyle />
      <MenuBar>
        <Row $gap={10}>
          <PlainButton type="button" $gap={6}><Icon name="menu" />文件</PlainButton>
          <Divider />
        </Row>
        <QuickBar>
          {['save', 'exportPdf', 'print', 'preview', 'undo', 'redo'].map((n) => (
            <PlainButton key={n} type="button" aria-label={n}><Icon name={n} /></PlainButton>
          ))}
          <PlainButton type="button" aria-label="custom"><IconSlot><Icon name="custom" /></IconSlot></PlainButton>
        </QuickBar>
        <Divider />
        <Nav>
          <Tab type="button" $kind="active">开始</Tab>
          {['插入', '页面布局', '公式', '数据', '审阅', '视图', '开发工具', '会员专享'].map((t) => <Tab key={t} type="button">{t}</Tab>)}
        </Nav>
        <Divider />
        <ContextTabs>
          <Tab type="button" $kind="context">表格工具</Tab>
          <Tab type="button">智能工具箱</Tab>
        </ContextTabs>
        <SearchBox><Icon name="search" /><input placeholder="查找功能、搜索模板" aria-label="查找功能、搜索模板" /></SearchBox>
        <Row $gap={11}>
          <PlainButton type="button"><Icon name="cloud" />未同步</PlainButton>
          <PlainButton type="button"><Icon name="person" />协作</PlainButton>
          <PlainButton type="button"><Icon name="share" />分享</PlainButton>
          <Row $gap={16}>
            <Divider />
            <PlainButton type="button" aria-label="更多"><Icon name="dots" /></PlainButton>
            <PlainButton type="button" aria-label="收起功能区"><Icon name="up" /></PlainButton>
          </Row>
        </Row>
      </MenuBar>

      <Ribbon>
        <Group $l={11} $gap={10}>
          <Tool icon="paste" label="粘贴" />
          <Stack>
            <Line><PlainButton type="button"><Icon name="cut" />剪切</PlainButton></Line>
            <Line><PlainButton type="button"><Icon name="copy" />复制<Caret /></PlainButton></Line>
          </Stack>
          <Tool icon="brush" label="格式刷" drop={false} />
          <Launcher type="button" aria-label="剪贴板设置" />
        </Group>

        <Group $l={5} $r={0}>
          <Stack>
            <Line>
              <FieldSet>
                <Field $w={137}><select aria-label="字体"><option>等线</option></select><Caret /></Field>
                <Field $w={70} $split><select aria-label="字号"><option>16</option></select><Caret /></Field>
              </FieldSet>
              <IconButton type="button" aria-label="增大字号"><Icon name="fontUp" /></IconButton>
              <IconButton type="button" aria-label="减小字号"><Icon name="fontDown" /></IconButton>
            </Line>
            <Line>
              <FontTools>
                {['bold', 'italic', 'underline', 'strike'].map((n) => (
                  <IconButton key={n} type="button" $w={25} aria-label={n}><Icon name={n} /></IconButton>
                ))}
              </FontTools>
              {['borders', 'cellBrush', 'fill', 'fontColor', 'eraser'].map((n) => (
                <DropButton key={n} type="button" aria-label={n}><Icon name={n} /><Caret /></DropButton>
              ))}
            </Line>
          </Stack>
          <Launcher type="button" aria-label="字体设置" />
        </Group>

        <Group $l={5} $r={9} $gap={13}>
          <Stack>
            <Line $gap={1}>
              {['vTop', 'vMid', 'vBot', 'outdent', 'indent'].map((n) => (
                <IconButton key={n} type="button" $on={n === 'vMid'} aria-label={n}><Icon name={n} /></IconButton>
              ))}
            </Line>
            <Line $gap={1}>
              {['left', 'center', 'right', 'justify', 'distribute'].map((n) => (
                <IconButton key={n} type="button" $on={n === 'center'} aria-label={n}><Icon name={n} /></IconButton>
              ))}
            </Line>
          </Stack>
          <Tool icon="merge" label="合并居中" muted />
          <Tool icon="wrap" label="自动换行" drop={false} />
          <Launcher type="button" aria-label="对齐设置" />
        </Group>

        <Group $l={6} $r={12} $gap={2}>
          <Stack>
            <FieldSet>
              <Field $w={135}><select aria-label="数字格式"><option>常规</option></select><Caret /></Field>
            </FieldSet>
            <Line $gap={1}>
              <IconButton type="button" $w={35} aria-label="货币"><Row $gap={5}><Icon name="yen" /><Caret /></Row></IconButton>
              {['percent', 'thousands', 'decUp', 'decDown'].map((n) => (
                <IconButton key={n} type="button" aria-label={n}><Icon name={n} /></IconButton>
              ))}
            </Line>
          </Stack>
          <Tool icon="convert" label="类型转换" />
          <Launcher type="button" aria-label="数字设置" />
        </Group>

        <Group $gap={11} $r={8}>
          <Tool icon="condFmt" label="条件格式" />
          <Stack>
            <Line><PlainButton type="button"><Icon name="tblStyle" />表格样式<Caret /></PlainButton></Line>
            <Line><PlainButton type="button"><Icon name="cellStyle" />单元格样式<Caret /></PlainButton></Line>
          </Stack>
        </Group>

        <Group $gap={12} $r={13}>
          <Tool icon="sum" label="求和" />
          <Tool icon="filter" label="筛选" />
          <Tool icon="sort" label="排序" />
          <Tool icon="fillDown" label="填充" />
        </Group>

        <Group $gap={12} $r={11}>
          <Tool icon="cell" label="单元格" />
          <Tool icon="rowCol" label="行和列" />
          <Tool icon="sheet" label="工作表" />
        </Group>

        <Group $r={12}><Tool icon="freeze" label="冻结窗格" /></Group>
        <Group $r={12}><Tool icon="tblTool" label="表格工具" /></Group>
        <Group><Tool icon="find" label="查找" /></Group>
        <ScrollRibbon type="button" aria-label="向右滚动"><Icon name="chevR" /></ScrollRibbon>
      </Ribbon>

      <Body>
        <Main>
          <FormulaBar>
            <NameBox><input aria-label="名称框" defaultValue="K18" /><Caret /></NameBox>
            <FormulaTools>
              <PlainButton type="button" aria-label="浏览公式"><Icon name="zoomOut" /></PlainButton>
              <PlainButton type="button">fx</PlainButton>
            </FormulaTools>
            <FormulaInput aria-label="编辑栏" defaultValue="工人" />
          </FormulaBar>
          <SheetRow>
            <Viewport><Sheet /></Viewport>
            <VScroll>
              <SplitHandle />
              <VTrack><Caret $up /><VThumb /><Caret /></VTrack>
            </VScroll>
          </SheetRow>
          <TabBar>
            <TabNav>
              {['first', 'prev', 'next', 'last'].map((n) => (
                <PlainButton key={n} type="button" aria-label={n}><Icon name={n} /></PlainButton>
              ))}
            </TabNav>
            <SheetTabs>
              {['成绩表', 'Sheet1', 'Sheet2', 'Sheet3', 'Sheet4', 'Sheet5'].map((t) => (
                <SheetTab key={t} type="button" $on={t === 'Sheet1'}>{t}</SheetTab>
              ))}
            </SheetTabs>
            <PlainButton type="button" aria-label="新建工作表"><Icon name="plus" /></PlainButton>
            <HScroll>
              <Grip />
              <HTrack><i /><HThumb /><i /></HTrack>
              <Grip />
            </HScroll>
          </TabBar>
        </Main>
        <SideBar>
          <DragHandle />
          {['rocket', 'arrow', 'sliders', 'pivot', 'shop', 'bulb', 'book', 'help'].map((n) => (
            <SideButton key={n} type="button" aria-label={n}><Icon name={n} /></SideButton>
          ))}
          <SideRule />
          <SideButton type="button" aria-label="tblSpark"><Icon name="tblSpark" /></SideButton>
          <SideRule $push />
          <SideMore type="button" aria-label="更多工具"><Icon name="more" /></SideMore>
        </SideBar>
      </Body>

      <StatusClip>
        <Status>
          <Row $gap={14}>
            <PlainButton type="button" aria-label="宏"><Icon name="macro" /></PlainButton>
            <Row $gap={9}>
              <Divider />
              <PlainButton type="button" $gap={3}><Icon name="payroll" />工资结算</PlainButton>
              <Caret $up />
            </Row>
          </Row>
          <StatusRight>
            <Row $gap={3}>
              <PlainButton type="button" aria-label="护眼模式"><Icon name="eye" /></PlainButton>
              <HighlightButton type="button" aria-label="阅读模式"><Icon name="cross" /><Caret /></HighlightButton>
            </Row>
            <Divider />
            <Row $gap={9}>
              {['normal', 'pageView', 'breakView'].map((n) => (
                <PlainButton key={n} type="button" aria-label={n}><Icon name={n} /></PlainButton>
              ))}
            </Row>
            <Divider />
            <ZoomLevel type="button">100%<Caret /></ZoomLevel>
            <PlainButton type="button" aria-label="缩小"><Icon name="minusBold" /></PlainButton>
            <ZoomRange type="range" aria-label="缩放" min={0} max={200} defaultValue={100} />
            <PlainButton type="button" aria-label="放大"><Icon name="plusBold" /></PlainButton>
            <PlainButton type="button" aria-label="全屏"><Icon name="full" /></PlainButton>
          </StatusRight>
        </Status>
      </StatusClip>

      <ColorMenu>
        <DefaultColor type="button"><span />默认</DefaultColor>
        <Swatches>
          {swatches.map((c, i) => <Swatch key={i} type="button" $c={c} $on={i === 13} aria-label={c} />)}
        </Swatches>
        <OtherColors type="button">其他颜色(M)...</OtherColors>
      </ColorMenu>

      <Arrow $l={833} $t={653} width="180" height="121" viewBox="0 0 180 121">
        <path d="M0 0l25 9-4 4-3 6z" stroke="none" />
        <path d="M20 13l157 106" strokeWidth="3" />
      </Arrow>
      <Arrow $r={167} $b={99} width="105" height="16" viewBox="0 0 105 16">
        <path d="M0 4.500L26 0l-2 6 1 7z" stroke="none" />
        <path d="M24 6.500l79 8" strokeWidth="3" />
      </Arrow>
      <Arrow $r={213} $b={4} width="172" height="34" viewBox="0 0 172 34">
        <path d="M0 29.500L26 18l-1 8 3 6z" stroke="none" />
        <path d="M26 25.500L170 2" strokeWidth="3" />
      </Arrow>
      <Mark $r={307} $b={78} width="14" height="20" viewBox="0 0 14 20">
        <path d="M.5.5v16l4-3.500 3 6 2.500-1-2.500-6h5.500z" fill="#fff" stroke={ink} />
      </Mark>

      <SiteMark>
        <svg width="42" height="40" viewBox="0 0 42 40">
          <defs>
            <linearGradient id="swirlBlue" x1="1" y1="0" x2="0" y2="1">
              <stop offset="0" stopColor="#3b86cf" />
              <stop offset=".5" stopColor="#62bdf0" />
              <stop offset="1" stopColor="#3f74cc" />
            </linearGradient>
            <linearGradient id="swirlGreen" x1="1" y1="0" x2="0" y2="1">
              <stop offset="0" stopColor="#58b96c" />
              <stop offset=".6" stopColor="#6fc36f" />
              <stop offset="1" stopColor="#e3df6a" />
            </linearGradient>
          </defs>
          <path d="M41 1C22-1 2 9 1 24c0 5 3 7 7 7 6 0 12-3 14-8-4 4-10 5-12 1C8 16 24 4 41 1z" fill="url(#swirlBlue)" />
          <path d="M24 10c8-3 17 0 17 9 0 12-16 21-38 19 15-1 27-8 29-17 1-5-3-9-8-11z" fill="url(#swirlGreen)" />
          <path d="M26 13c-6 2-13 8-12 11 2 2 7 0 10-4-1 6-7 11-13 12 12 1 19-6 20-11 0-4-2-7-5-8z" fill="#5aa3dc" />
        </svg>
        <div><strong>极光下载站</strong><span>www.xz7.com</span></div>
      </SiteMark>
    </Shell>
  );
}
